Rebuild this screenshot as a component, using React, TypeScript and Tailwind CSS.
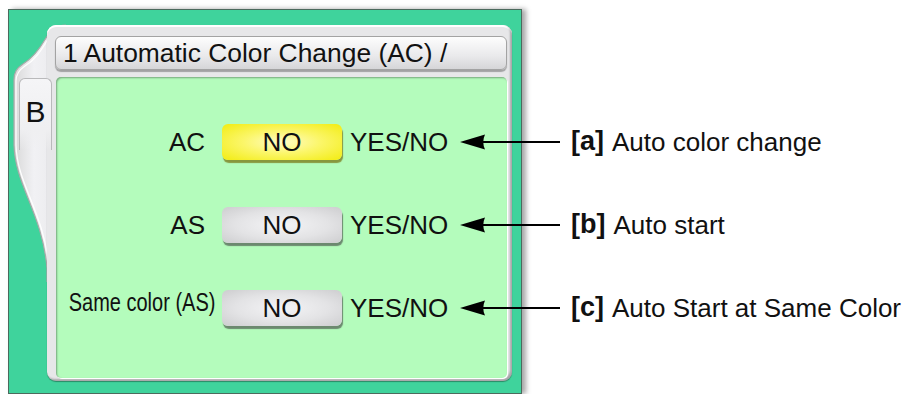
const rows = [
  { label: 'AC', value: 'NO', active: true, narrow: false },
  { label: 'AS', value: 'NO', active: false, narrow: false },
  { label: 'Same color (AS)', value: 'NO', active: false, narrow: true },
];

const notes = [
  { key: '[a]', text: 'Auto color change' },
  { key: '[b]', text: 'Auto start' },
  { key: '[c]', text: 'Auto Start at Same Color' },
];

function Arrow() {
  return (
    <svg width="100" height="16" viewBox="0 0 100 16" className="block">
      <path d="M0 8 L25 0.5 Q21.5 8 25 15.5 Z" fill="#000" />
      <rect x="22" y="7" width="78" height="2" fill="#000" />
    </svg>
  );
}

function FrameSwoosh() {
  // decorative left edge of the grey frame, drawn in page coordinates
  return (
    <svg
      width="62"
      height="272"
      viewBox="9 10 62 272"
      className="absolute left-0 top-0"
    >
      <defs>
        <linearGradient id="sw" x1="0" y1="0" x2="1" y2="0">
          <stop offset="0" stopColor="#d9d9d9" />
          <stop offset="0.35" stopColor="#f1f1f4" />
          <stop offset="1" stopColor="#e6e6e8" />
        </linearGradient>
      </defs>
      <path
        d="M66 25 C55 25 51 30 46 38 C39 50 33 58 23 64 C17 68 14 72 14 80 L14 145 C15 185 42 212 47 268 L47 282 L71 282 L71 25 Z"
        fill="url(#sw)"
      />
      <path
        d="M66 25 C55 25 51 30 46 38 C39 50 33 58 23 64 C17 68 14 72 14 80 L14 145 C15 185 42 212 47 268 L47 282"
        fill="none"
        stroke="#a9aaa9"
        strokeWidth="1.2"
      />
      <path
        d="M66 27 C56 27 52 32 48 39 C41 51 35 60 25 66 C19 70 16 74 16 81 L16 145 C17 184 43 210 49 266"
        fill="none"
        stroke="#ffffff"
        strokeWidth="1.2"
      />
    </svg>
  );
}

export default function App() {
  return (
    <div className="w-[911px] h-[394px] overflow-hidden bg-white flex text-[#111] font-['Liberation_Sans',Arial,sans-serif]">
      {/* green machine panel */}
      <div className="relative ml-[8px] mt-[9px] w-[514px] h-[385px] shrink-0 bg-[#3fd39c] border border-[#4c6a5d] shadow-[4px_0_5px_rgba(0,0,0,0.35)]">
        <FrameSwoosh />

        <div className="relative ml-[38px] mt-[15px] w-[465px] h-[356px] rounded-[9px] bg-[#e7e7e9] pl-[8px] pr-[5px] pt-[11px] pb-[3px] flex flex-col shadow-[inset_-2px_-2px_2px_rgba(0,0,0,0.28),inset_0_2px_0_#ffffff,0_1px_1px_rgba(0,0,0,0.35)]">
          {/* title bar */}
          <div className="h-[34px] w-[452px] shrink-0 rounded-[6px] border border-[#a3a3a3] bg-[linear-gradient(#fdfdfd,#e9e9eb_60%,#d6d6d8)] shadow-[0_2px_1px_rgba(0,0,0,0.3)] flex items-center pl-[7px] text-[26.4px] leading-none whitespace-nowrap">
            1 Automatic Color Change (AC) /
          </div>

          {/* settings area */}
          <div className="mt-[7px] ml-[1px] w-[451px] flex-1 rounded-[5px] bg-[#b4fcbc] shadow-[inset_1px_1px_2px_rgba(0,0,0,0.35),1px_1px_0_#ffffff] pt-[46px] flex flex-col gap-[46px]">
            {rows.map((row) => (
              <div key={row.label} className="h-[37px] flex items-center">
                {row.narrow ? (
                  <div className="w-[159px] flex justify-end mb-[10px]">
                    <span className="inline-block whitespace-nowrap text-[25px] leading-none scale-x-[0.8] origin-right">
                      {row.label}
                    </span>
                  </div>
                ) : (
                  <div className="w-[159px] text-right text-[26px] leading-none pr-[10px]">
                    {row.label}
                  </div>
                )}
                <div
                  className={
                    row.active
                      ? 'ml-[7px] w-[120px] h-[36px] rounded-[6px] flex items-center justify-center text-[26px] leading-none bg-[radial-gradient(ellipse_at_center,#fffcc8_0%,#fbf66a_45%,#f2ec10_100%)] shadow-[1px_3px_1px_rgba(120,118,20,0.75)]'
                      : 'ml-[7px] w-[120px] h-[36px] rounded-[6px] flex items-center justify-center text-[26px] leading-none bg-[radial-gradient(ellipse_at_center,#f4f4f6_0%,#e3e3e5_55%,#cdcdcf_100%)] shadow-[1px_3px_1px_rgba(60,60,60,0.6)]'
                  }
                >
                  {row.value}
                </div>
                <div className="ml-[8px] text-[26px] leading-none">YES/NO</div>
              </div>
            ))}
          </div>
        </div>

        {/* B tab */}
        <div className="absolute left-[10px] top-[68px] w-[33px] h-[72px] rounded-t-[6px] border border-b-0 border-[#b9b9bb] bg-[linear-gradient(#f5f5f7,#efeff1_70%,rgba(236,236,238,0))] flex justify-center pt-[18px] text-[30px] leading-none">
          B
        </div>
      </div>

      {/* callouts */}
      <div className="ml-[49px] pt-[123px] flex flex-col gap-[46px]">
        {notes.map((note) => (
          <div key={note.key} className="relative h-[37px] flex items-center whitespace-nowrap">
            <div className="absolute right-[calc(100%+11px)] top-1/2 -translate-y-1/2">
              <Arrow />
            </div>
            <span className="font-bold text-[27px] leading-none">{note.key}</span>
            <span className="ml-[8px] text-[26px] leading-none">{note.text}</span>
          </div>
        ))}
      </div>
    </div>
  );
}
